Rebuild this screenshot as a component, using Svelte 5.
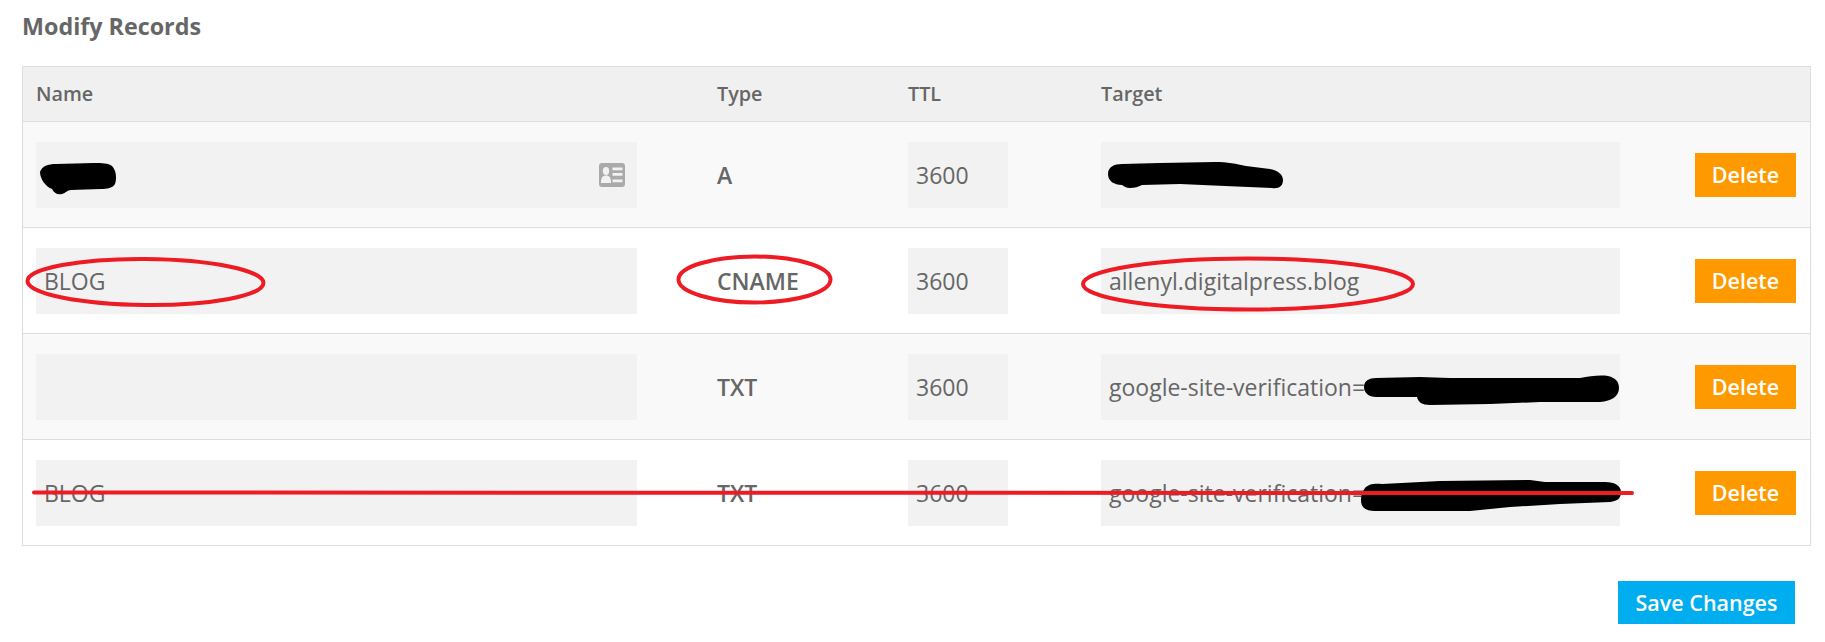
<script>
  const records = [
    { name: "", type: "A", target: "", stripe: true, icon: true },
    { name: "BLOG", type: "CNAME", target: "allenyl.digitalpress.blog", stripe: false },
    { name: "", type: "TXT", target: "google-site-verification=", stripe: true },
    { name: "BLOG", type: "TXT", target: "google-site-verification=", stripe: false },
  ];
</script>

<main class="page">
  <h2>Modify Records</h2>

  <div class="records">
    <div class="row head">
      <span>Name</span>
      <span>Type</span>
      <span>TTL</span>
      <span>Target</span>
    </div>

    {#each records as rec}
      <div class="row" class:stripe={rec.stripe}>
        <div class="field name">
          <input type="text" value={rec.name} />
          {#if rec.icon}
            <svg class="card" viewBox="0 0 26 24" width="26" height="24">
              <rect width="26" height="24" rx="3" fill="#aaa" />
              <ellipse cx="7" cy="8" rx="3.200" ry="3.900" fill="#f2f2f2" />
              <path d="M2 20c0-5.500 1.500-7.500 5-7.500s5 2 5 7.500z" fill="#f2f2f2" />
              <path d="M13.500 4.500h10v2.700h-10zM13.500 10h10v2.700h-10zM13.500 16.500h10v2.700h-10z" fill="#f2f2f2" />
            </svg>
          {/if}
        </div>
        <strong>{rec.type}</strong>
        <input class="field ttl" type="text" value="3600" />
        <input class="field target" type="text" value={rec.target} />
        <button class="delete">Delete</button>
      </div>
    {/each}
  </div>

  <div class="actions">
    <button class="save">Save Changes</button>
  </div>

  <!-- hand drawn marks on top of the screenshot -->
  <svg class="marks" viewBox="0 0 1825 642" width="1825" height="642">
    <g fill="#000">
      <path d="M40 172C42 166 48 164 56 164L94 163C102 163 108 163 112 166C116 170 117 178 115 184C113 188 107 189 101 189L71 190C67 190 66 193 62 194C57 195 54 193 52 189C46 187 40 179 40 172Z" />
      <path d="M1108 174C1108 167 1114 164 1122 164L1160 163L1215 162C1228 162 1236 164 1246 166L1270 169C1279 171 1283 175 1283 180C1283 186 1279 189 1272 188L1225 186L1180 184L1142 185C1138 187 1135 188 1130 188C1126 188 1124 186 1122 185C1114 185 1108 181 1108 174Z" />
      <path d="M1364 387C1364 381 1369 378 1376 378L1420 377L1450 378L1580 378C1590 376 1600 375 1608 376C1616 378 1619 382 1619 388C1619 396 1612 401 1600 402L1540 402L1490 404L1430 405C1422 405 1418 402 1417 397L1376 397C1369 397 1364 393 1364 387Z" />
      <path d="M1365 488C1368 484 1375 483 1382 484L1440 481L1530 480L1545 482L1605 482C1615 482 1621 486 1621 492C1621 498 1618 501 1610 502L1560 504L1510 507L1490 509L1470 511L1375 511C1365 511 1361 507 1361 500C1361 496 1362 492 1365 488Z" />
    </g>
    <g fill="none" stroke="#ed1c24" stroke-width="4">
      <ellipse cx="145.500" cy="282" rx="118" ry="23" transform="rotate(0.5 146 282)" />
      <ellipse cx="754.500" cy="279.500" rx="76" ry="23" />
      <ellipse cx="1248" cy="284" rx="165" ry="25.500" />
      <path d="M34 492.500L1632 493" stroke-linecap="round" />
    </g>
  </svg>
</main>

<style>
  :global(body) {
    background: #fff;
  }
  .page {
    position: relative;
    width: 1825px;
    height: 642px;
    padding: 0 14px 0 22px;
    box-sizing: border-box;
    overflow: hidden;
    font-family: "Open Sans", sans-serif;
    font-size: 23px;
    color: #666;
  }
  h2 {
    margin: 0;
    height: 66px;
    padding-top: 10px;
    box-sizing: border-box;
    font-size: 23.300px;
    line-height: 32px;
    font-weight: 700;
  }
  .records {
    border: 1px solid #ddd;
    border-bottom: 0;
  }
  .row {
    display: grid;
    grid-template-columns: 681px 191px 193px 594px 101px;
    align-items: center;
    height: 106px;
    padding: 0 13px;
    border-bottom: 1px solid #ddd;
    box-sizing: border-box;
  }
  .row.stripe {
    background: #f9f9f9;
  }
  .head {
    height: 55px;
    padding-bottom: 2px;
    background: #f0f0f0;
    font-size: 19.800px;
    font-weight: 600;
  }
  strong {
    font-weight: 600;
  }
  input {
    font: inherit;
    color: #666;
    border: 0;
    outline: 0;
    background: #f2f2f2;
    padding: 0 8px;
    height: 66px;
    box-sizing: border-box;
  }
  .name {
    position: relative;
    width: 601px;
  }
  .name input {
    display: block;
    width: 100%;
  }
  .card {
    position: absolute;
    right: 12px;
    top: 21px;
  }
  .ttl {
    width: 100px;
  }
  .target {
    width: 519px;
  }
  button {
    border: 0;
    color: #fff;
    font: inherit;
    font-size: 21.500px;
    font-weight: 600;
    padding: 0;
    cursor: pointer;
  }
  .delete {
    height: 44px;
    background: #f90;
  }
  .actions {
    display: flex;
    justify-content: flex-end;
    margin-top: 35px;
    padding-right: 16px;
  }
  .save {
    width: 177px;
    height: 43px;
    background: #00aeef;
  }
  .marks {
    position: absolute;
    left: 0;
    top: 0;
    pointer-events: none;
  }
</style>
